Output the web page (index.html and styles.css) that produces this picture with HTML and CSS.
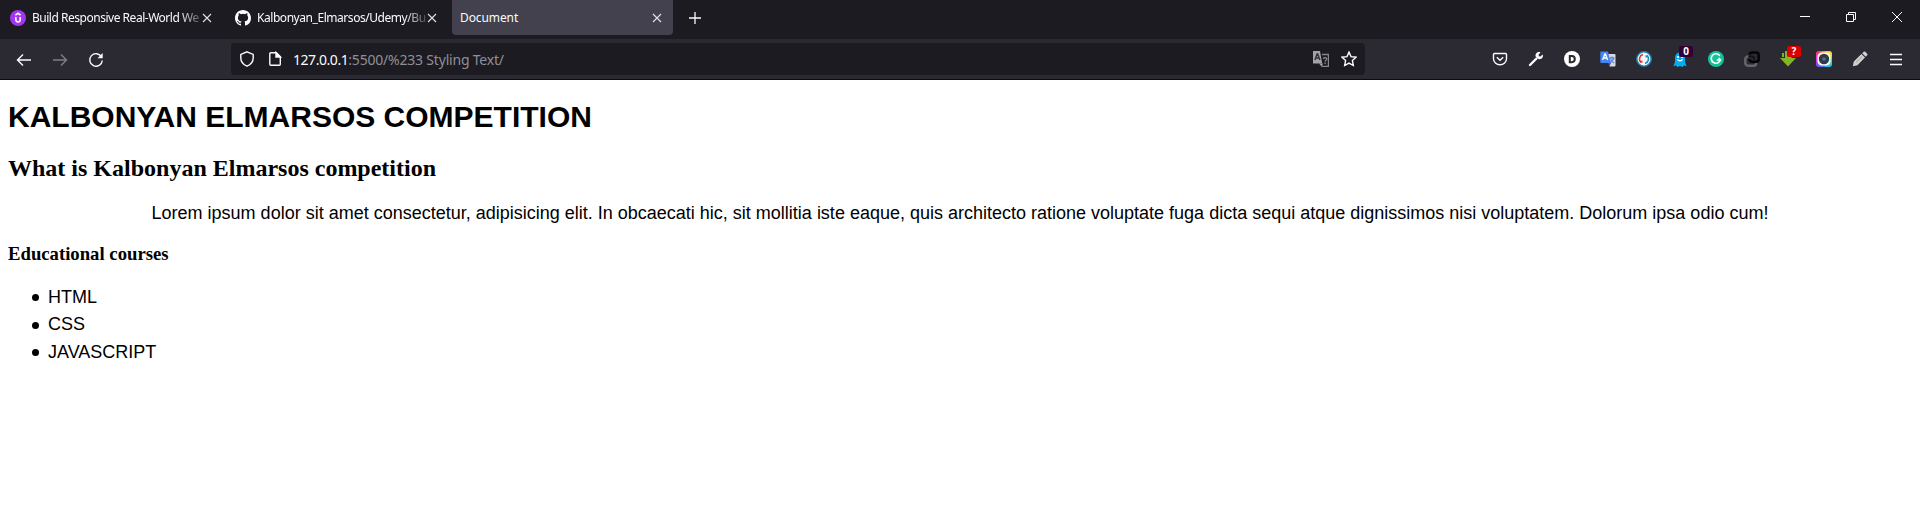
FILE: index.html
```html
<!DOCTYPE html>
<html lang="en">
<head>
<meta charset="utf-8">
<title>Document</title>
<link rel="stylesheet" href="styles.css">
</head>
<body>
<header class="browser">
  <div class="tabbar">
    <div class="tab">
      <svg class="favicon" width="16" height="16" viewBox="0 0 16 16"><circle cx="8" cy="8" r="8" fill="#a435f0"/><path d="M5.400 5.100 8 3.300l2.600 1.800M5.800 7v2.600c0 3.100 4.400 3.100 4.400 0V7" fill="none" stroke="#fff" stroke-width="1.600"/></svg>
      <span class="tab-label fade label-one">Build Responsive Real-World We</span>
      <svg class="close" width="10" height="10" viewBox="0 0 10 10"><path d="m1 1 8 8M9 1 1 9"/></svg>
    </div>
    <div class="tab">
      <svg class="favicon" width="16" height="16" viewBox="0 0 16 16"><path fill="#fff" d="M8 0C3.580 0 0 3.580 0 8c0 3.540 2.290 6.530 5.470 7.590.4.070.55-.17.55-.38 0-.19-.01-.82-.01-1.490-2.010.37-2.530-.49-2.690-.94-.09-.23-.48-.94-.82-1.130-.28-.15-.68-.52-.01-.53.63-.01 1.080.58 1.230.82.72 1.210 1.870.87 2.330.66.07-.52.28-.87.51-1.070-1.780-.2-3.640-.89-3.640-3.950 0-.87.31-1.590.82-2.150-.08-.2-.36-1.020.08-2.120 0 0 .67-.21 2.200.82a7.600 7.600 0 0 1 4 0c1.530-1.040 2.200-.82 2.200-.82.44 1.100.16 1.920.08 2.120.51.56.82 1.270.82 2.150 0 3.070-1.870 3.750-3.650 3.950.29.25.54.73.54 1.480 0 1.070-.01 1.930-.01 2.200 0 .21.15.46.55.38A8 8 0 0 0 16 8c0-4.420-3.580-8-8-8Z"/></svg>
      <span class="tab-label fade label-two">Kalbonyan_Elmarsos/Udemy/Bu</span>
      <svg class="close" width="10" height="10" viewBox="0 0 10 10"><path d="m1 1 8 8M9 1 1 9"/></svg>
    </div>
    <div class="tab tab-active">
      <span class="tab-label">Document</span>
      <svg class="close" width="10" height="10" viewBox="0 0 10 10"><path d="m1 1 8 8M9 1 1 9"/></svg>
    </div>
    <svg class="new-tab" width="12" height="12" viewBox="0 0 12 12"><path d="M6 0v12M0 6h12"/></svg>
    <div class="window-controls">
      <svg width="10" height="10" viewBox="0 0 10 10"><path d="M0 4.500h10"/></svg>
      <svg width="10" height="10" viewBox="0 0 10 10"><path d="M.5 2.500h7v7h-7zM2.500 2.500v-2h7v7h-2"/></svg>
      <svg width="10" height="10" viewBox="0 0 10 10"><path d="m0 0 10 10M10 0 0 10"/></svg>
    </div>
  </div>
  <nav class="toolbar">
    <div class="nav-buttons">
      <svg width="16" height="16" viewBox="0 0 16 16"><path d="M15 8H1.500M7 2.500 1.500 8 7 13.500"/></svg>
      <svg class="disabled" width="16" height="16" viewBox="0 0 16 16"><path d="M1 8h13.500M9 2.500 14.500 8 9 13.500"/></svg>
      <svg width="16" height="16" viewBox="0 0 16 16"><path d="M13.600 5A6.300 6.300 0 1 0 14.300 8.500"/><path d="M14.700 1v5.200H9.500z" fill="#fbfbfe" stroke="none"/></svg>
    </div>
    <div class="urlbar">
      <svg class="shield" width="16" height="16" viewBox="0 0 16 16"><path d="M8 .8 14.200 3.400v3.500c0 3.300-2.200 6.500-6.200 8.300C4 13.400 1.800 10.200 1.800 6.900V3.400z"/></svg>
      <svg class="page-icon" width="16" height="16" viewBox="0 0 16 16"><path d="M3.800 1.700h5.500l4 4v7.600a1 1 0 0 1-1 1H3.800a1 1 0 0 1-1-1V2.700a1 1 0 0 1 1-1z"/><path d="M9 1.500V6h4.500z" fill="#fbfbfe"/></svg>
      <span class="url"><span class="host">127.0.0.1</span>:5500/%233 Styling Text/</span>
      <svg class="translate" width="16" height="16" viewBox="0 0 16 16"><path d="M0 0h7l2.200 12.500H0z" fill="#a2a2a8" stroke="none"/><path d="m2 9 2-6h.8l2 6M3 7h3" stroke="#35343b" stroke-width="1.500"/><path d="m6 12.500 4 0-1.300 3z" fill="#a2a2a8" stroke="none"/><path d="M9 3.500h6.500v12H8.500M10.500 8c0-2 3.400-1.800 3.200 0 0 1-1.500 1-1.500 2.500M12.200 11.500V13" stroke="#85858c"/></svg>
      <svg class="star" width="16" height="16" viewBox="0 0 16 16"><path d="m8 1.100 2 4.500 5 .6-3.600 3.400.9 4.900L8 12.100l-4.300 2.400.9-4.900L1 6.200l5-.6z"/></svg>
    </div>
    <div class="extensions">
      <svg viewBox="0 0 16 16"><path d="M2.500 2.500h11a1 1 0 0 1 1 1v4.300a6.500 6 0 0 1-13 0V3.500a1 1 0 0 1 1-1zM4.800 6.200 8 9.300l3.200-3.100"/></svg>
      <svg viewBox="0 0 16 16"><path d="M2 14 8.500 7.500" stroke-width="2.400" stroke-linecap="round"/><path d="M12.500 1.200 10.600 3.700l.2 1.500 1.500.2 2.500-1.900c.8 3-1.300 5.200-4.400 4.600L7.600 5.600C7 2.600 9.400.4 12.500 1.200z" fill="#fbfbfe" stroke="none"/></svg>
      <svg viewBox="0 0 16 16"><circle cx="8" cy="8" r="8" fill="#fff" stroke="none"/><path d="M5.800 5h2c4 0 4 6.200 0 6.200h-2z" stroke="#2b2a33" stroke-width="2"/></svg>
      <svg viewBox="0 0 16 16"><path d="M7 3h7.500a1 1 0 0 1 1 1v10.500a1 1 0 0 1-1 1H9.500z" fill="#d7d9dd" stroke="none"/><path d="M9.500 7h5M12 5.500V7M13.800 7c-.5 2.500-1.800 3.500-3.800 4.800M10.500 8.500l3.500 3.500" stroke="#5f87d8"/><path d="M1.200.5H8L10.800 12H1.200A.9.900 0 0 1 .3 11.100V1.400a.9.900 0 0 1 .9-.9z" fill="#4285f4" stroke="none"/><path d="m2.600 9 2.200-6h.6l2.200 6M3.500 7h3.300" stroke="#fff" stroke-width="1.300"/><path d="m8 12 2.800 0-1.300 3.500z" fill="#2858b8" stroke="none"/></svg>
      <svg viewBox="0 0 16 16"><circle cx="8" cy="8" r="7.200" fill="#f4f5f6" stroke="#1683b4" stroke-width="1.500"/><path d="M7 3.600a4.500 4.500 0 0 0-1.800 7.900" stroke="#db3832" stroke-width="1.500"/><path d="M9 12.400a4.500 4.500 0 0 0 1.800-7.900" stroke="#1989b9" stroke-width="1.500"/><path d="m3.800 11.700 2.900-.2-.6-2.400z" fill="#db3832" stroke="none"/><path d="m12.200 4.300-2.900.2.600 2.400z" fill="#1989b9" stroke="none"/></svg>
      <div class="badged">
        <svg viewBox="0 0 16 16"><path d="M3 7C3-.5 13-.5 13 7v4l1.600 4.300-2.500-.7-1.700 1.400L8 14.900 5.600 16l-1.800-1.400-2.400.7L3 11z" fill="#00aef0" stroke="none"/><circle cx="6" cy="6" r="1.100" fill="#fff" stroke="none"/><circle cx="10" cy="6" r="1.100" fill="#fff" stroke="none"/><path d="M5.400 8.300c1.400 2 3.800 2 5.200 0" stroke="#fff"/></svg>
        <span class="badge badge-purple">0</span>
      </div>
      <svg viewBox="0 0 16 16"><circle cx="8" cy="8" r="8" fill="#15c39a" stroke="none"/><path d="M11.800 4.800A4.700 4.700 0 1 0 12.400 9H8.800" stroke="#fff" stroke-width="1.600"/><path d="m11 6 2.200 2.800L10 9.300z" fill="#fff" stroke="none"/></svg>
      <svg viewBox="0 0 16 16"><path d="M4.500 5.500H4A2.700 2.700 0 0 0 1.300 8.200V12A2.700 2.700 0 0 0 4 14.700h5.500A2.700 2.700 0 0 0 12.200 12" stroke="#65646b" stroke-width="2.500"/><path d="M5.500 3.800A2.700 2.700 0 0 1 8 1.500h4A2.700 2.700 0 0 1 14.700 4.200V8A2.700 2.700 0 0 1 12 10.700H8A2.700 2.700 0 0 1 5.300 8" stroke="#050507" stroke-width="2.500"/><path d="M4.500 5.500H8a2 2 0 0 1 2 2v1" stroke="#141318" stroke-width="2"/></svg>
      <div class="badged">
        <svg viewBox="0 0 16 16"><path d="M2 2h2v4H2zM5 0h6.500v7H16l-8 8.500L0 7h5z" fill="#82b522" stroke="none"/></svg>
        <span class="badge badge-red">?</span>
      </div>
      <div class="lens"><svg viewBox="0 0 16 16"><rect x="2.200" y="2.200" width="11.600" height="11.600" rx="3.500" stroke="#fff"/><circle cx="8" cy="8" r="6" fill="#fff" stroke="none"/><circle cx="8" cy="8" r="4.200" fill="#56718a" stroke="#34343b" stroke-width="2"/><circle cx="8" cy="8" r="2.500" stroke="#263b4c"/></svg></div>
      <svg viewBox="0 0 16 16"><path d="m.8 15.200 1-4.600 7.600-7.600 3.600 3.600-7.600 7.600zM10.200 2.200 12 .5c.7-.7 4.200 2.600 3.400 3.500l-1.700 1.800z" fill="#d0d0d0" stroke="none"/><path d="m4 11.600 6-6" stroke="#b4b4b4"/></svg>
      <svg viewBox="0 0 16 16"><path d="M2 3.500h12M2 8.500h12M2 13.500h12"/></svg>
    </div>
  </nav>
</header>
<main class="document">
  <h1 class="title">KALBONYAN ELMARSOS COMPETITION</h1>
  <h2 class="subtitle">What is Kalbonyan Elmarsos competition</h2>
  <p class="intro">Lorem ipsum dolor sit amet consectetur, adipisicing elit. In obcaecati hic, sit mollitia iste eaque, quis architecto ratione voluptate fuga dicta sequi atque dignissimos nisi voluptatem. Dolorum ipsa odio cum!</p>
  <h3 class="section-title">Educational courses</h3>
  <ul class="courses">
    <li>HTML</li>
    <li>CSS</li>
    <li>JAVASCRIPT</li>
  </ul>
</main>
</body>
</html>
```
FILE: styles.css
```css
* { box-sizing: border-box; }
body { margin: 0; background: #fff; color: #000; overflow: hidden; }
svg { display: block; flex: none; fill: none; stroke: #fbfbfe; }
.browser { height: 80px; background: #2b2a33; border-bottom: 1px solid #0c0c0d; font-family: "Noto Sans", sans-serif; color: #fbfbfe; }
.tabbar { height: 39px; display: flex; background: #1c1b22; }
.tab { width: 223px; height: 35px; margin-right: 4px; padding: 0 11px 0 10px; display: flex; align-items: center; border-radius: 0 0 4px 4px; }
.tab:first-child { margin-right: 2px; }
.favicon { margin-right: 6px; stroke: none; }
.tab-label { flex: 1; min-width: 0; white-space: nowrap; font-size: 12px; line-height: 18px; letter-spacing: -0.1px; }
.fade { mask-image: linear-gradient(to right, #000 147px, transparent 175px); }
.label-one { letter-spacing: -0.48px; }
.label-two { letter-spacing: -0.45px; }
.close { stroke: #e2e2e6; stroke-width: 1.1; }
.tab-active { width: 221px; margin-right: 5px; background: #42414d; padding-left: 8px; }
.new-tab { margin: 12px 0 0 11px; stroke-width: 1.3; }
.window-controls { margin: 12px 18px 0 auto; display: flex; gap: 36px; }
.toolbar { height: 40px; display: flex; align-items: center; }
.nav-buttons { width: 231px; padding: 1px 0 0 16px; display: flex; gap: 20px; }
.nav-buttons svg { stroke-width: 1.4; }
.nav-buttons .disabled { opacity: .4; }
.urlbar { width: 1134px; height: 32px; padding: 0 8px; display: flex; align-items: center; background: #1c1b22; border-radius: 4px; }
.urlbar svg { stroke-width: 1.4; }
.page-icon { margin-left: 12px; }
.url { flex: 1; margin: 2px 0 0 10px; font-size: 14px; line-height: 20px; color: #8f8f96; letter-spacing: -0.2px; }
.host { color: #fbfbfe; letter-spacing: -0.45px; }
.star { margin-left: 12px; }
.extensions { margin: 0 16px 0 auto; display: flex; gap: 20px; }
.extensions svg { width: 16px; height: 16px; stroke-width: 1.4; }
.badged { position: relative; }
.badge { position: absolute; top: -5px; right: -5px; width: 14px; height: 11px; border-radius: 2px; font-size: 10px; font-weight: 700; line-height: 11px; text-align: center; color: #fff; }
.badge-purple { background: #330033; }
.badge-red { background: #d90000; }
.lens { width: 16px; height: 16px; border-radius: 3px; background: conic-gradient(#ff9d22, #f8e43a 45deg, #5be36c 100deg, #22cbe8 140deg, #3688f5 190deg, #9a43ef 235deg, #f238c5 285deg, #ff3859 325deg, #ff9d22); }
.document { padding: 0 8px; font-family: "Liberation Sans", Arial, sans-serif; }
.title { margin: 0; padding-top: 18px; font-size: 30px; line-height: 37px; }
.subtitle { margin: 20px 0 0; font: 700 24px/27px "Liberation Serif", serif; }
.intro { margin: 18px 0 0; font-size: 18px; line-height: 27px; text-align: center; }
.section-title { margin: 16px 0 0; font: 700 18.72px/21px "Liberation Serif", serif; }
.courses { margin: 20px 0 0; padding: 0 0 0 24px; list-style: none; font-size: 18px; line-height: 27.4px; }
.courses li { display: flex; align-items: center; gap: 9px; }
.courses li::before { content: ""; width: 7px; height: 7px; border-radius: 50%; background: #000; }
```
